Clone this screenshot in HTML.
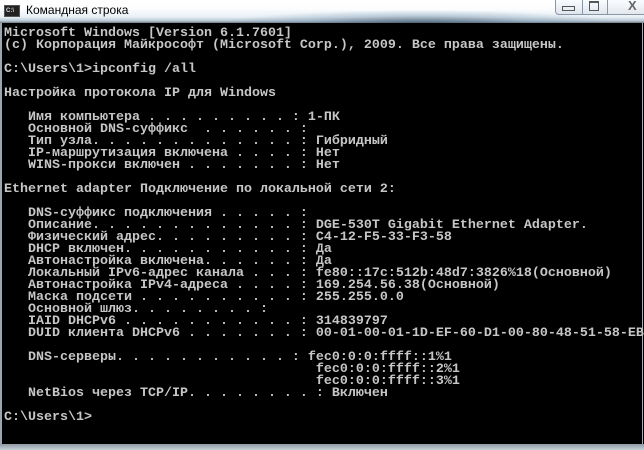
<!DOCTYPE html>
<html><head><meta charset="utf-8"><style>
html,body{margin:0;padding:0;width:644px;height:450px;overflow:hidden;background:#000}
#title{position:absolute;left:0;top:0;width:644px;height:23px;
background:
radial-gradient(ellipse 200px 14px at 420px 24px, rgba(70,90,110,0.85), rgba(120,150,175,0.4) 60%, rgba(255,255,255,0) 100%),
linear-gradient(#fff 0,#fdfeff 8px,#e8f0f6 17px,#b8c6d2 21px,#6a7580 23px);}
#icon{position:absolute;left:4px;top:5px;width:14px;height:10px;background:#222;border:1px solid #555;color:#ddd;font:bold 6px "Liberation Sans",sans-serif;line-height:10px;text-indent:1px}
#ttext{position:absolute;left:26px;top:3px;font:12px "Liberation Sans","DejaVu Sans",sans-serif;color:#000}
.btn{position:absolute;top:-1px;height:14px;border:1px solid #8a96a3;background:linear-gradient(#fafcff,#dfe6ee);}
#con{position:absolute;left:2px;top:23px;width:640px;height:421px;background:#000;border-right:1px solid #aab}
pre{margin:0;position:absolute;left:4px;top:28px;font-family:"Liberation Mono",monospace;font-size:13.33px;line-height:12px;color:#c6c6c6;white-space:pre;font-weight:bold;letter-spacing:0}
#bot{position:absolute;left:0;top:444px;width:644px;height:6px;background:linear-gradient(#8d99a4,#c7d0d8)}
#lb{position:absolute;left:0;top:23px;width:2px;height:421px;background:#9aa6b1}
</style></head><body>
<div id="title"></div>
<div id="icon">C:\</div>
<div id="ttext">Командная строка</div>
<div class="btn" style="left:555px;width:26px;border-radius:0 0 0 4px"></div>
<div class="btn" style="left:582px;width:24px"></div>
<div class="btn" style="left:607px;width:40px;background:linear-gradient(#fafcff,#e3e8ee)"></div>
<div style="position:absolute;left:562px;top:6px;width:11px;height:3px;border:1px solid #555"></div>
<div style="position:absolute;left:589px;top:1px;width:8px;height:7px;border:1px solid #555;border-top-width:2px"></div>
<div style="position:absolute;left:628px;top:-2px;font:bold 13px 'Liberation Sans',sans-serif;color:#666">X</div>
<div id="con"></div><div id="lb"></div>
<pre>Microsoft Windows [Version 6.1.7601]
(c) Корпорация Майкрософт (Microsoft Corp.), 2009. Все права защищены.

C:\Users\1&gt;ipconfig /all

Настройка протокола IP для Windows

   Имя компьютера . . . . . . . . . : 1-ПК
   Основной DNS-суффикс  . . . . . . :
   Тип узла. . . . . . . . . . . . . : Гибридный
   IP-маршрутизация включена . . . . : Нет
   WINS-прокси включен . . . . . . . : Нет

Ethernet adapter Подключение по локальной сети 2:

   DNS-суффикс подключения . . . . . :
   Описание. . . . . . . . . . . . . : DGE-530T Gigabit Ethernet Adapter.
   Физический адрес. . . . . . . . . : C4-12-F5-33-F3-58
   DHCP включен. . . . . . . . . . . : Да
   Автонастройка включена. . . . . . : Да
   Локальный IPv6-адрес канала . . . : fe80::17c:512b:48d7:3826%18(Основной)
   Автонастройка IPv4-адреса . . . . : 169.254.56.38(Основной)
   Маска подсети . . . . . . . . . . : 255.255.0.0
   Основной шлюз. . . . . . . . :
   IAID DHCPv6 . . . . . . . . . . . : 314839797
   DUID клиента DHCPv6 . . . . . . . : 00-01-00-01-1D-EF-60-D1-00-80-48-51-58-EB

   DNS-серверы. . . . . . . . . . . : fec0:0:0:ffff::1%1
                                       fec0:0:0:ffff::2%1
                                       fec0:0:0:ffff::3%1
   NetBios через TCP/IP. . . . . . . . : Включен

C:\Users\1&gt;</pre>
<div id="bot"></div>
</body></html>
